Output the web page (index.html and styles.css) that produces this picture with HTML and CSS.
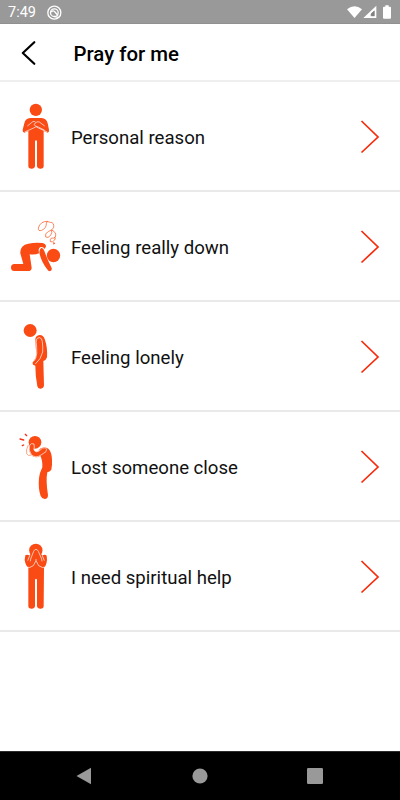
FILE: index.html
```
<!DOCTYPE html>
<html lang="en">
<head>
<meta charset="utf-8">
<title>Pray for me</title>
<link rel="stylesheet" href="styles.css">
</head>
<body>
<div class="screen">
  <div class="status">
    <span class="time">7:49</span>
    <svg class="dnd" width="16" height="16" viewBox="0 0 48 48" fill="none" stroke="#fff"><circle cx="22" cy="23" r="19.500" stroke-width="4"/><circle cx="22" cy="23" r="11.500" stroke-width="4"/><path d="M13 21c4-5 8-4 11 0l9 11" stroke-width="4"/><path d="M22 35l13 2" stroke-width="4"/></svg>
    <svg class="signals" width="50" height="16" viewBox="0 0 150 48"><path d="M0 13Q22.500-5 45 13L22.500 39Z" fill="#fff"/><path fill="#fff" fill-rule="evenodd" d="M49 39L88 2V39ZM71 34H83V16L71 27Z"/><path d="M73 33V25l9-8v16Z" fill="#808080"/><path fill="#fff" d="M111 5h4V1h10v4h4q3 0 3 3v30q0 3-3 3h-18q-3 0-3-3V8q0-3 3-3Z"/></svg>
  </div>
  <header class="header">
    <svg class="back" width="16" height="26" viewBox="0 0 16 26"><path d="M14.300 2.200L2.800 13L14.300 23.800" fill="none" stroke="#000" stroke-width="2.200" stroke-linecap="round" stroke-linejoin="round"/></svg>
    <h1>Pray for me</h1>
  </header>
  <main class="list">
    <a class="row">
      <svg class="figure" viewBox="0 -39 213 324"><g fill="#fa4b14"><circle cx="107.500" cy="44.500" r="18.500"/><path d="M91 69H125Q139 70 143 85L147 104Q148 111 143 113L131 108V213Q131 221 121.500 221Q112 221 111 213V138Q108 133 105 138V213Q104 221 95 221Q85 221 85 213V108L73 113Q67 111 68 104L73 85Q76 70 91 69Z"/></g><path d="M82 93L97 81Q102 76 107 82M134 93L118 81Q112 76 102 88M102 88Q104 94 115 96L134 106M74 111L101 99Q108 91 115 99L142 111" fill="none" stroke="#fff" stroke-width="2"/></svg>
      <span class="label">Personal reason</span>
      <svg class="chevron" viewBox="0 0 20 34"><path d="M1.500 1L18 17L1.500 32.500"/></svg>
    </a>
    <a class="row">
      <svg class="figure" viewBox="0 -54 213 324"><g fill="#fa4b14"><circle cx="160.500" cy="136.500" r="20"/><path d="M85 101Q104 97 127 99Q138 101 138 110L133 117Q132 111 124 111Q116 112 116 121L117 130Q106 135 89 133L95 173Q95 183 84 183H43Q33 183 33 172.500Q33 162 43 162H70L61 130Q59 106 85 101Z"/><path d="M124 114Q130 113 133 123Q140 144 155 174Q157 182 149 184Q145 184 141 177Q125 157 119 133Q116 118 124 114Z"/></g><g fill="none" stroke="#fa4b14" stroke-width="2"><path d="M144 34Q121 33 115 54Q114 65 125 61Q139 55 139 41Q138 32 151 37Q163 37 161 52Q159 60 146 64Q133 70 137 81Q144 86 152 76Q158 65 154 62Q152 57 162 64Q171 71 166 82Q160 86 154 84Q149 89 151 95Q158 98 164 90Q169 84 162 82"/></g><path d="M159 97l7 2-5 5z" fill="#fa4b14"/></svg>
      <span class="label">Feeling really down</span>
      <svg class="chevron" viewBox="0 0 20 34"><path d="M1.500 1L18 17L1.500 32.500"/></svg>
    </a>
    <a class="row">
      <svg class="figure" viewBox="0 -39 213 324"><g fill="#fa4b14"><circle cx="90.500" cy="46.500" r="19.500"/><path d="M106 73Q107 61 119 60Q131 60 135 75Q143 98 141 127Q139 135 130 138L132 211Q131 221 122 221Q114 222 112 214Q106 183 106 152L99 149Q95 143 101 138Q108 130 109 117Q107 96 106 73Z"/></g><path d="M106 147Q123 133 128 111Q129 96 127 80Q126 69 119 68Q111 67 109 75Q108 79 110 97Q112 118 107 130Q105 135 100 139" fill="none" stroke="#fff" stroke-width="2"/></svg>
      <span class="label">Feeling lonely</span>
      <svg class="chevron" viewBox="0 0 20 34"><path d="M1.500 1L18 17L1.500 32.500"/></svg>
    </a>
    <a class="row">
      <svg class="figure" viewBox="0 -39 213 324"><g fill="#fa4b14"><circle cx="105" cy="52" r="19"/><path d="M120 71Q134 62 145 71Q155 80 156 103Q157 122 154 134Q149 140 142 142Q137 166 144 211Q144 222 134 222Q126 222 122 213Q114 191 117 159Q119 143 127 127Q128 106 121 92Q110 101 97 93Q87 84 87 67Q88 57 96 58Q103 60 101 72L105 81Q115 82 120 71Z"/></g><path d="M102 57Q94 53 89 61Q84 75 94 89Q107 101 123 90L138 80Q142 72 136 68Q129 65 116 79Q109 82 104 78Q100 73 103 66Z" fill="#fa4b14" stroke="#fff" stroke-width="2"/><path d="M85 60Q77 75 80 86Q85 95 94 90" fill="none" stroke="#fa4b14" stroke-width="1.500"/><g stroke="#f52d16" stroke-width="4" stroke-linecap="round"><path d="M76 28l4 4M60 42l11 3M67 62l4-2"/></g></svg>
      <span class="label">Lost someone close</span>
      <svg class="chevron" viewBox="0 0 20 34"><path d="M1.500 1L18 17L1.500 32.500"/></svg>
    </a>
    <a class="row">
      <svg class="figure" viewBox="0 -39 213 324"><g fill="#fa4b14"><circle cx="107.500" cy="46" r="20"/><path d="M76 61Q80 57 88 61L96 53Q104 42 107.500 42Q111 42 119 53L127 61Q136 57 140 62L141 75Q139 92 132 98L131 213Q131 221 121.500 221Q112 221 111 213V134Q108 129 105 134V213Q104 221 95 221Q85 221 85 213V98Q77 92 74 75Z"/></g><path d="M87 55L89 62L83 77M129 55L127 62L133 77M92 72L101 49Q104 43 107.500 43Q112 43 115 49L125 72M92 72L91 79M125 72L126 79M77 96Q89 101 100 92L108 77L116 92Q127 101 139 96M108 77V72" fill="none" stroke="#fff" stroke-width="2"/></svg>
      <span class="label">I need spiritual help</span>
      <svg class="chevron" viewBox="0 0 20 34"><path d="M1.500 1L18 17L1.500 32.500"/></svg>
    </a>
  </main>
  <nav class="nav">
    <svg width="16" height="18" viewBox="0 0 16 18"><path d="M.5 9L15 .8V17.200Z"/></svg>
    <svg width="16" height="16" viewBox="0 0 16 16"><circle cx="8" cy="8" r="7.600"/></svg>
    <svg width="16" height="16" viewBox="0 0 16 16"><rect width="16" height="16" rx="1.200"/></svg>
  </nav>
</div>
</body>
</html>
```
FILE: styles.css
```
* { box-sizing: border-box; }
body { margin: 0; background: #fff; font-family: Roboto, "Liberation Sans", sans-serif; }
.screen { width: 400px; height: 800px; display: flex; flex-direction: column; }
.status { height: 24px; background: #999; border-bottom: 1px solid #909090; display: flex; align-items: center; padding: 2px 7px 0 8px; color: #fff; }
.time { font-size: 14.5px; line-height: 20px; padding-top: 1px; }
.dnd { margin-left: 11px; }
.signals { margin-left: auto; width: 50px; margin-right: -4px; }
.header { height: 58px; border-bottom: 2px solid #efefef; display: flex; align-items: center; padding: 1px 0 0 20px; }
.header h1 { margin: 3px 0 0 37.500px; font-size: 20.400px; font-weight: 500; line-height: 28px; color: #000; }
.list { flex: 1; }
.row { height: 110px; border-bottom: 2px solid #e9e9e9; display: flex; align-items: center; }
.figure { width: 71px; height: 108px; flex: none; }
.label { flex: 1; font-size: 18.600px; line-height: 26px; color: #111; padding-top: 4px; }
.chevron { width: 20px; height: 34px; margin: 1px 20px 0 0; fill: none; stroke: #f72b0b; stroke-width: 1.700; }
.nav { height: 49px; background: #000; border-top: 1px solid #2c2c2c; display: flex; justify-content: space-between; align-items: center; padding: 0 77px 0 76px; fill: #999; }
```
